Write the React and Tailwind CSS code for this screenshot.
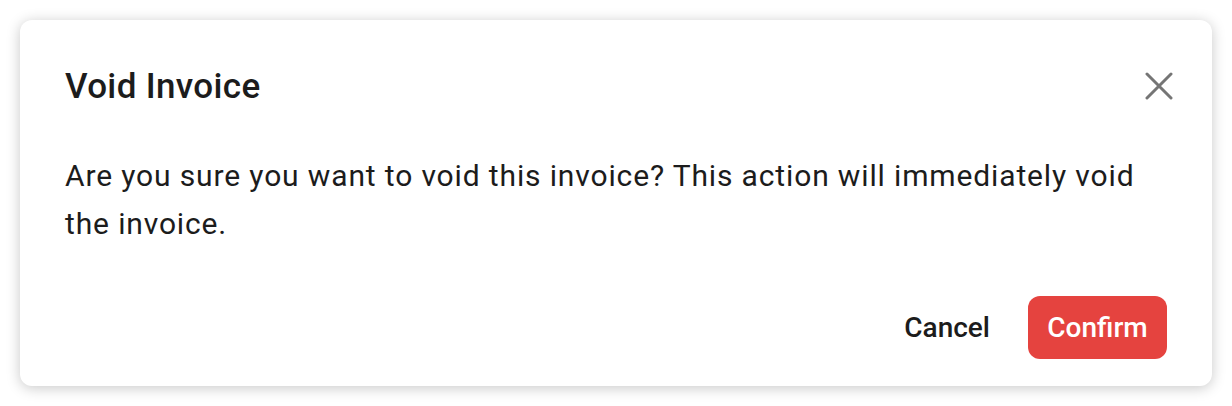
import React from 'react';

const font = { fontFamily: 'Roboto, "Liberation Sans", sans-serif' };

export default function App() {
  return (
    <div className="bg-white w-[1232px] h-[406px] p-5" style={font}>
      <div className="w-[1192px] h-[366px] bg-white rounded-[12px] shadow-[0_2px_14px_rgba(0,0,0,0.22)] flex flex-col px-[45px] pt-[46px] pb-[27px]">
        {/* header */}
        <div className="flex items-center justify-between h-[40px]">
          <h2 className="text-[35px] leading-[40px] font-medium text-[#1c1c1c] tracking-[0.35px] translate-y-[1px]">Void Invoice</h2>
          <button type="button" className="w-[40px] h-[40px] -mr-[12px] flex items-center justify-center text-[#757575]">
            <svg width="28" height="28" viewBox="0 0 28 28" fill="none" stroke="currentColor" strokeWidth="3" strokeLinecap="round">
              <path d="M2 2L26 26M26 2L2 26" />
            </svg>
          </button>
        </div>

        <p className="mt-[46px] text-[30px] leading-[48px] text-[#1c1c1c] tracking-[0.86px] pr-[20px]">
          Are you sure you want to void this invoice? This action will immediately void the invoice.
        </p>

        <div className="mt-auto flex items-center justify-end gap-[38px]">
          <button type="button" className="text-[28px] font-medium text-[#1c1c1c]">Cancel</button>
          <button type="button" className="h-[63px] w-[139px] rounded-[12px] bg-[#e5433f] text-white text-[28px] font-medium">
            Confirm
          </button>
        </div>
      </div>
    </div>
  );
}
